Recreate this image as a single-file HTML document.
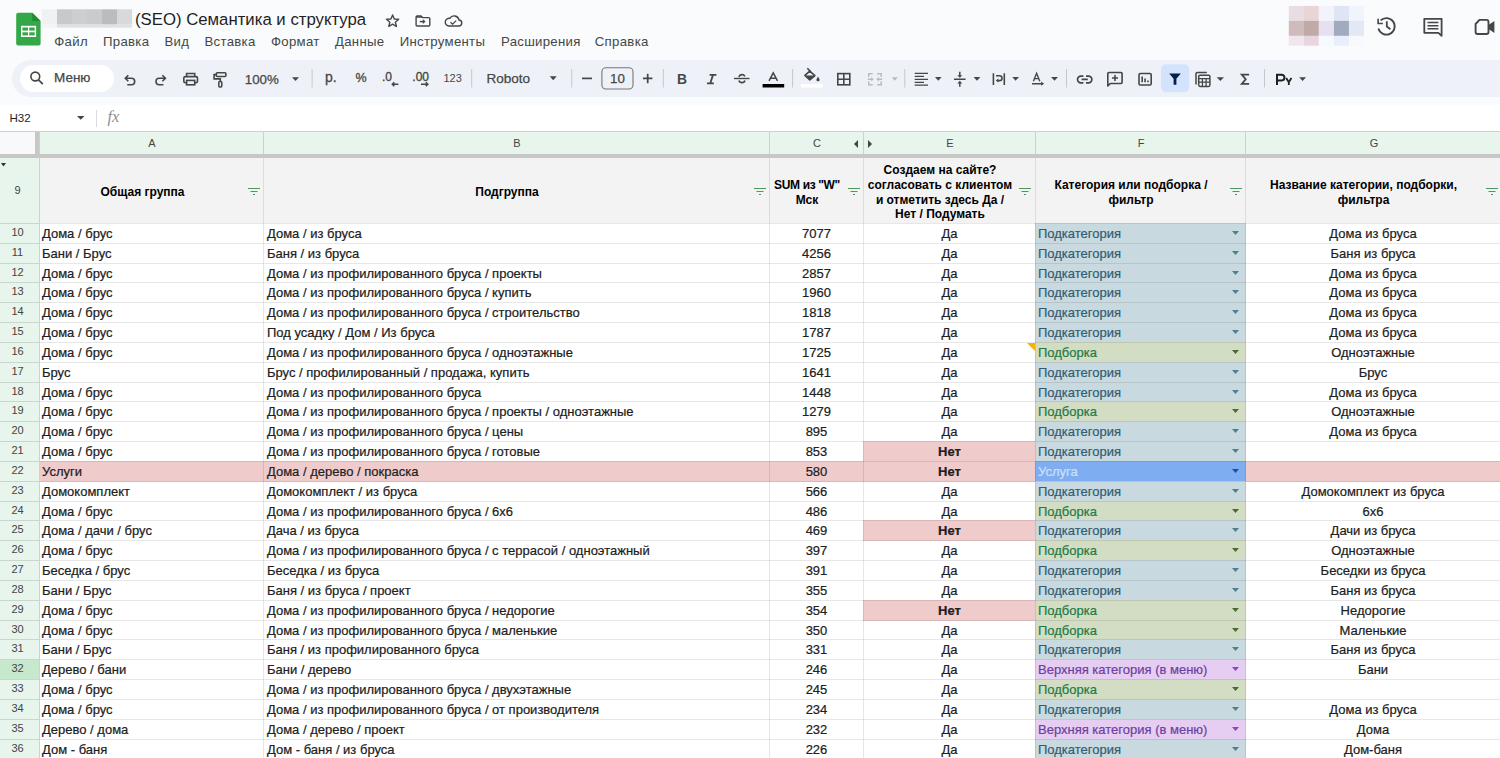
<!DOCTYPE html><html><head><meta charset="utf-8"><style>
*{margin:0;padding:0;box-sizing:border-box}
html,body{width:1500px;height:758px;overflow:hidden;background:#fff;font-family:"Liberation Sans",sans-serif;position:relative}
.a{position:absolute;white-space:nowrap}
.t{font-size:13px;color:#202020;line-height:15px;-webkit-text-stroke:0.2px currentColor}
.rh{font-size:11px;color:#444;line-height:12px;text-align:center;width:35px;left:0}
.hb{font-weight:bold;font-size:12px;color:#000;line-height:14.8px;text-align:center}
.menu{font-size:13.2px;color:#444746;line-height:16px;top:34px;letter-spacing:0.3px}
.ic{position:absolute}
</style></head><body>
<div class="a" style="left:0;top:0;width:1500px;height:105px;background:#f9fbfd"></div>
<div class="a" style="left:12px;top:60px;width:1600px;height:37px;background:#eef2f8;border-radius:18.5px"></div>
<div class="a" style="left:20px;top:65px;width:94px;height:27px;background:#fff;border-radius:14px"></div>
<div class="a" style="left:0;top:131px;width:1500px;height:1px;background:#d0d0d0"></div>
<div class="a" style="left:0;top:132px;width:35px;height:22px;background:#f8f9fa"></div>
<div class="a" style="left:35px;top:132px;width:4px;height:22px;background:#c7c7c7"></div>
<div class="a" style="left:39px;top:132px;width:1461px;height:22px;background:#e7f5ec"></div>
<div class="a" style="left:0;top:154px;width:1500px;height:4px;background:#c7c7c7"></div>
<div class="a" style="left:0;top:158px;width:39px;height:600px;background:#e7f5ec"></div>
<div class="a" style="left:40px;top:158px;width:1460px;height:65px;background:#f3f3f3"></div>
<div class="a" style="left:0;top:660px;width:39px;height:19px;background:#c6e8cd"></div>
<div class="a" style="left:1035px;top:223px;width:211px;height:21px;background:#c8dae0"></div>
<div class="a" style="left:1035px;top:243px;width:211px;height:21px;background:#c8dae0"></div>
<div class="a" style="left:1035px;top:263px;width:211px;height:20px;background:#c8dae0"></div>
<div class="a" style="left:1035px;top:282px;width:211px;height:21px;background:#c8dae0"></div>
<div class="a" style="left:1035px;top:302px;width:211px;height:21px;background:#c8dae0"></div>
<div class="a" style="left:1035px;top:322px;width:211px;height:21px;background:#c8dae0"></div>
<div class="a" style="left:1035px;top:342px;width:211px;height:21px;background:#d2ddc3"></div>
<div class="a" style="left:1035px;top:362px;width:211px;height:21px;background:#c8dae0"></div>
<div class="a" style="left:1035px;top:382px;width:211px;height:20px;background:#c8dae0"></div>
<div class="a" style="left:1035px;top:401px;width:211px;height:21px;background:#d2ddc3"></div>
<div class="a" style="left:1035px;top:421px;width:211px;height:21px;background:#c8dae0"></div>
<div class="a" style="left:863px;top:441px;width:173px;height:21px;background:#f0cbcc"></div>
<div class="a" style="left:1035px;top:441px;width:211px;height:21px;background:#c8dae0"></div>
<div class="a" style="left:39px;top:461px;width:1461px;height:21px;background:#f0cbcc"></div>
<div class="a" style="left:1035px;top:461px;width:211px;height:21px;background:#7eadf2"></div>
<div class="a" style="left:1035px;top:481px;width:211px;height:21px;background:#c8dae0"></div>
<div class="a" style="left:1035px;top:501px;width:211px;height:20px;background:#d2ddc3"></div>
<div class="a" style="left:863px;top:520px;width:173px;height:21px;background:#f0cbcc"></div>
<div class="a" style="left:1035px;top:520px;width:211px;height:21px;background:#c8dae0"></div>
<div class="a" style="left:1035px;top:540px;width:211px;height:21px;background:#d2ddc3"></div>
<div class="a" style="left:1035px;top:560px;width:211px;height:21px;background:#c8dae0"></div>
<div class="a" style="left:1035px;top:580px;width:211px;height:21px;background:#c8dae0"></div>
<div class="a" style="left:863px;top:600px;width:173px;height:21px;background:#f0cbcc"></div>
<div class="a" style="left:1035px;top:600px;width:211px;height:21px;background:#d2ddc3"></div>
<div class="a" style="left:1035px;top:620px;width:211px;height:20px;background:#d2ddc3"></div>
<div class="a" style="left:1035px;top:639px;width:211px;height:21px;background:#c8dae0"></div>
<div class="a" style="left:1035px;top:659px;width:211px;height:21px;background:#e5cef2"></div>
<div class="a" style="left:1035px;top:679px;width:211px;height:21px;background:#d2ddc3"></div>
<div class="a" style="left:1035px;top:699px;width:211px;height:21px;background:#c8dae0"></div>
<div class="a" style="left:1035px;top:719px;width:211px;height:21px;background:#e5cef2"></div>
<div class="a" style="left:1035px;top:739px;width:211px;height:20px;background:#c8dae0"></div>
<div class="a" style="left:40px;top:223px;width:1460px;height:1px;background:rgba(0,0,0,0.095)"></div>
<div class="a" style="left:0;top:223px;width:39px;height:1px;background:#c9d6cd"></div>
<div class="a" style="left:40px;top:243px;width:1460px;height:1px;background:rgba(0,0,0,0.095)"></div>
<div class="a" style="left:0;top:243px;width:39px;height:1px;background:#c9d6cd"></div>
<div class="a" style="left:40px;top:263px;width:1460px;height:1px;background:rgba(0,0,0,0.095)"></div>
<div class="a" style="left:0;top:263px;width:39px;height:1px;background:#c9d6cd"></div>
<div class="a" style="left:40px;top:282px;width:1460px;height:1px;background:rgba(0,0,0,0.095)"></div>
<div class="a" style="left:0;top:282px;width:39px;height:1px;background:#c9d6cd"></div>
<div class="a" style="left:40px;top:302px;width:1460px;height:1px;background:rgba(0,0,0,0.095)"></div>
<div class="a" style="left:0;top:302px;width:39px;height:1px;background:#c9d6cd"></div>
<div class="a" style="left:40px;top:322px;width:1460px;height:1px;background:rgba(0,0,0,0.095)"></div>
<div class="a" style="left:0;top:322px;width:39px;height:1px;background:#c9d6cd"></div>
<div class="a" style="left:40px;top:342px;width:1460px;height:1px;background:rgba(0,0,0,0.095)"></div>
<div class="a" style="left:0;top:342px;width:39px;height:1px;background:#c9d6cd"></div>
<div class="a" style="left:40px;top:362px;width:1460px;height:1px;background:rgba(0,0,0,0.095)"></div>
<div class="a" style="left:0;top:362px;width:39px;height:1px;background:#c9d6cd"></div>
<div class="a" style="left:40px;top:382px;width:1460px;height:1px;background:rgba(0,0,0,0.095)"></div>
<div class="a" style="left:0;top:382px;width:39px;height:1px;background:#c9d6cd"></div>
<div class="a" style="left:40px;top:401px;width:1460px;height:1px;background:rgba(0,0,0,0.095)"></div>
<div class="a" style="left:0;top:401px;width:39px;height:1px;background:#c9d6cd"></div>
<div class="a" style="left:40px;top:421px;width:1460px;height:1px;background:rgba(0,0,0,0.095)"></div>
<div class="a" style="left:0;top:421px;width:39px;height:1px;background:#c9d6cd"></div>
<div class="a" style="left:40px;top:441px;width:1460px;height:1px;background:rgba(0,0,0,0.095)"></div>
<div class="a" style="left:0;top:441px;width:39px;height:1px;background:#c9d6cd"></div>
<div class="a" style="left:40px;top:461px;width:1460px;height:1px;background:rgba(0,0,0,0.095)"></div>
<div class="a" style="left:0;top:461px;width:39px;height:1px;background:#c9d6cd"></div>
<div class="a" style="left:40px;top:481px;width:1460px;height:1px;background:rgba(0,0,0,0.095)"></div>
<div class="a" style="left:0;top:481px;width:39px;height:1px;background:#c9d6cd"></div>
<div class="a" style="left:40px;top:501px;width:1460px;height:1px;background:rgba(0,0,0,0.095)"></div>
<div class="a" style="left:0;top:501px;width:39px;height:1px;background:#c9d6cd"></div>
<div class="a" style="left:40px;top:520px;width:1460px;height:1px;background:rgba(0,0,0,0.095)"></div>
<div class="a" style="left:0;top:520px;width:39px;height:1px;background:#c9d6cd"></div>
<div class="a" style="left:40px;top:540px;width:1460px;height:1px;background:rgba(0,0,0,0.095)"></div>
<div class="a" style="left:0;top:540px;width:39px;height:1px;background:#c9d6cd"></div>
<div class="a" style="left:40px;top:560px;width:1460px;height:1px;background:rgba(0,0,0,0.095)"></div>
<div class="a" style="left:0;top:560px;width:39px;height:1px;background:#c9d6cd"></div>
<div class="a" style="left:40px;top:580px;width:1460px;height:1px;background:rgba(0,0,0,0.095)"></div>
<div class="a" style="left:0;top:580px;width:39px;height:1px;background:#c9d6cd"></div>
<div class="a" style="left:40px;top:600px;width:1460px;height:1px;background:rgba(0,0,0,0.095)"></div>
<div class="a" style="left:0;top:600px;width:39px;height:1px;background:#c9d6cd"></div>
<div class="a" style="left:40px;top:620px;width:1460px;height:1px;background:rgba(0,0,0,0.095)"></div>
<div class="a" style="left:0;top:620px;width:39px;height:1px;background:#c9d6cd"></div>
<div class="a" style="left:40px;top:639px;width:1460px;height:1px;background:rgba(0,0,0,0.095)"></div>
<div class="a" style="left:0;top:639px;width:39px;height:1px;background:#c9d6cd"></div>
<div class="a" style="left:40px;top:659px;width:1460px;height:1px;background:rgba(0,0,0,0.095)"></div>
<div class="a" style="left:0;top:659px;width:39px;height:1px;background:#c9d6cd"></div>
<div class="a" style="left:40px;top:679px;width:1460px;height:1px;background:rgba(0,0,0,0.095)"></div>
<div class="a" style="left:0;top:679px;width:39px;height:1px;background:#c9d6cd"></div>
<div class="a" style="left:40px;top:699px;width:1460px;height:1px;background:rgba(0,0,0,0.095)"></div>
<div class="a" style="left:0;top:699px;width:39px;height:1px;background:#c9d6cd"></div>
<div class="a" style="left:40px;top:719px;width:1460px;height:1px;background:rgba(0,0,0,0.095)"></div>
<div class="a" style="left:0;top:719px;width:39px;height:1px;background:#c9d6cd"></div>
<div class="a" style="left:40px;top:739px;width:1460px;height:1px;background:rgba(0,0,0,0.095)"></div>
<div class="a" style="left:0;top:739px;width:39px;height:1px;background:#c9d6cd"></div>
<div class="a" style="left:40px;top:758px;width:1460px;height:1px;background:rgba(0,0,0,0.095)"></div>
<div class="a" style="left:0;top:758px;width:39px;height:1px;background:#c9d6cd"></div>
<div class="a" style="left:39px;top:132px;width:1px;height:22px;background:#c9d3cc"></div>
<div class="a" style="left:39px;top:158px;width:1px;height:600px;background:rgba(0,0,0,0.095)"></div>
<div class="a" style="left:263px;top:132px;width:1px;height:22px;background:#c9d3cc"></div>
<div class="a" style="left:263px;top:158px;width:1px;height:600px;background:rgba(0,0,0,0.095)"></div>
<div class="a" style="left:769px;top:132px;width:1px;height:22px;background:#c9d3cc"></div>
<div class="a" style="left:769px;top:158px;width:1px;height:600px;background:rgba(0,0,0,0.095)"></div>
<div class="a" style="left:863px;top:132px;width:1px;height:22px;background:#c9d3cc"></div>
<div class="a" style="left:863px;top:158px;width:1px;height:600px;background:rgba(0,0,0,0.095)"></div>
<div class="a" style="left:1035px;top:132px;width:1px;height:22px;background:#c9d3cc"></div>
<div class="a" style="left:1035px;top:158px;width:1px;height:600px;background:rgba(0,0,0,0.095)"></div>
<div class="a" style="left:1245px;top:132px;width:1px;height:22px;background:#c9d3cc"></div>
<div class="a" style="left:1245px;top:158px;width:1px;height:600px;background:rgba(0,0,0,0.095)"></div>
<div class="a" style="left:39px;top:158px;width:1px;height:600px;background:#d0d0d0"></div>
<div class="a" style="left:132px;top:137px;width:40px;text-align:center;font-size:11px;line-height:13px;color:#444">A</div>
<div class="a" style="left:497px;top:137px;width:40px;text-align:center;font-size:11px;line-height:13px;color:#444">B</div>
<div class="a" style="left:797px;top:137px;width:40px;text-align:center;font-size:11px;line-height:13px;color:#444">C</div>
<div class="a" style="left:930px;top:137px;width:40px;text-align:center;font-size:11px;line-height:13px;color:#444">E</div>
<div class="a" style="left:1121px;top:137px;width:40px;text-align:center;font-size:11px;line-height:13px;color:#444">F</div>
<div class="a" style="left:1354px;top:137px;width:40px;text-align:center;font-size:11px;line-height:13px;color:#444">G</div>
<svg class="ic" style="left:853px;top:140px" width="6" height="8"><path d="M5 0 L1 4 L5 8Z" fill="#444"/></svg>
<svg class="ic" style="left:867px;top:140px" width="6" height="8"><path d="M1 0 L5 4 L1 8Z" fill="#444"/></svg>
<div class="a rh" style="top:184px">9</div>
<svg class="ic" style="left:0px;top:163px" width="8" height="5"><path d="M1 0 L6 0 L3.5 3.5Z" fill="#333"/></svg>
<div class="a hb" style="left:41px;top:185.0px;width:203px">Общая группа</div>
<div class="a hb" style="left:264px;top:185.0px;width:486px">Подгруппа</div>
<div class="a hb" style="left:770px;top:178.0px;width:74px"><span style="letter-spacing:-0.35px">SUM из "W"</span></div>
<div class="a hb" style="left:770px;top:192.8px;width:74px">Мск</div>
<div class="a hb" style="left:864px;top:163.0px;width:152px">Создаем на сайте?</div>
<div class="a hb" style="left:864px;top:177.8px;width:152px">согласовать с клиентом</div>
<div class="a hb" style="left:864px;top:192.6px;width:152px">и отметить здесь Да /</div>
<div class="a hb" style="left:864px;top:207.4px;width:152px">Нет / Подумать</div>
<div class="a hb" style="left:1036px;top:178.0px;width:190px">Категория или подборка /</div>
<div class="a hb" style="left:1036px;top:192.8px;width:190px">фильтр</div>
<div class="a hb" style="left:1246px;top:178.0px;width:235px">Название категории, подборки,</div>
<div class="a hb" style="left:1246px;top:192.8px;width:235px">фильтра</div>
<svg class="ic" style="left:248px;top:188px" width="12" height="8"><path d="M0 0.5h12M2.5 3.5h7M5 6.5h2" stroke="#4a9a5c" stroke-width="1.2"/></svg>
<svg class="ic" style="left:754px;top:188px" width="12" height="8"><path d="M0 0.5h12M2.5 3.5h7M5 6.5h2" stroke="#4a9a5c" stroke-width="1.2"/></svg>
<svg class="ic" style="left:848px;top:188px" width="12" height="8"><path d="M0 0.5h12M2.5 3.5h7M5 6.5h2" stroke="#4a9a5c" stroke-width="1.2"/></svg>
<svg class="ic" style="left:1019px;top:188px" width="12" height="8"><path d="M0 0.5h12M2.5 3.5h7M5 6.5h2" stroke="#4a9a5c" stroke-width="1.2"/></svg>
<svg class="ic" style="left:1230px;top:188px" width="12" height="8"><path d="M0 0.5h12M2.5 3.5h7M5 6.5h2" stroke="#4a9a5c" stroke-width="1.2"/></svg>
<svg class="ic" style="left:1486px;top:188px" width="12" height="8"><path d="M0 0.5h12M2.5 3.5h7M5 6.5h2" stroke="#4a9a5c" stroke-width="1.2"/></svg>
<div class="a rh" style="top:226px">10</div>
<div class="a t" style="left:42px;top:226px">Дома / брус</div>
<div class="a t" style="left:267px;top:226px">Дома / из бруса</div>
<div class="a t" style="left:770px;top:226px;width:93px;text-align:center">7077</div>
<div class="a t" style="left:864px;top:226px;width:171px;text-align:center;">Да</div>
<div class="a t" style="left:1038px;top:226px;color:#335c70">Подкатегория</div>
<svg class="ic" style="left:1232px;top:231px" width="8" height="5"><path d="M0 0 L7 0 L3.5 4Z" fill="#4f7f93"/></svg>
<div class="a t" style="left:1246px;top:226px;width:254px;text-align:center">Дома из бруса</div>
<div class="a rh" style="top:246px">11</div>
<div class="a t" style="left:42px;top:246px">Бани / Брус</div>
<div class="a t" style="left:267px;top:246px">Баня / из бруса</div>
<div class="a t" style="left:770px;top:246px;width:93px;text-align:center">4256</div>
<div class="a t" style="left:864px;top:246px;width:171px;text-align:center;">Да</div>
<div class="a t" style="left:1038px;top:246px;color:#335c70">Подкатегория</div>
<svg class="ic" style="left:1232px;top:251px" width="8" height="5"><path d="M0 0 L7 0 L3.5 4Z" fill="#4f7f93"/></svg>
<div class="a t" style="left:1246px;top:246px;width:254px;text-align:center">Баня из бруса</div>
<div class="a rh" style="top:266px">12</div>
<div class="a t" style="left:42px;top:266px">Дома / брус</div>
<div class="a t" style="left:267px;top:266px">Дома / из профилированного бруса / проекты</div>
<div class="a t" style="left:770px;top:266px;width:93px;text-align:center">2857</div>
<div class="a t" style="left:864px;top:266px;width:171px;text-align:center;">Да</div>
<div class="a t" style="left:1038px;top:266px;color:#335c70">Подкатегория</div>
<svg class="ic" style="left:1232px;top:271px" width="8" height="5"><path d="M0 0 L7 0 L3.5 4Z" fill="#4f7f93"/></svg>
<div class="a t" style="left:1246px;top:266px;width:254px;text-align:center">Дома из бруса</div>
<div class="a rh" style="top:285px">13</div>
<div class="a t" style="left:42px;top:285px">Дома / брус</div>
<div class="a t" style="left:267px;top:285px">Дома / из профилированного бруса / купить</div>
<div class="a t" style="left:770px;top:285px;width:93px;text-align:center">1960</div>
<div class="a t" style="left:864px;top:285px;width:171px;text-align:center;">Да</div>
<div class="a t" style="left:1038px;top:285px;color:#335c70">Подкатегория</div>
<svg class="ic" style="left:1232px;top:290px" width="8" height="5"><path d="M0 0 L7 0 L3.5 4Z" fill="#4f7f93"/></svg>
<div class="a t" style="left:1246px;top:285px;width:254px;text-align:center">Дома из бруса</div>
<div class="a rh" style="top:305px">14</div>
<div class="a t" style="left:42px;top:305px">Дома / брус</div>
<div class="a t" style="left:267px;top:305px">Дома / из профилированного бруса / строительство</div>
<div class="a t" style="left:770px;top:305px;width:93px;text-align:center">1818</div>
<div class="a t" style="left:864px;top:305px;width:171px;text-align:center;">Да</div>
<div class="a t" style="left:1038px;top:305px;color:#335c70">Подкатегория</div>
<svg class="ic" style="left:1232px;top:310px" width="8" height="5"><path d="M0 0 L7 0 L3.5 4Z" fill="#4f7f93"/></svg>
<div class="a t" style="left:1246px;top:305px;width:254px;text-align:center">Дома из бруса</div>
<div class="a rh" style="top:325px">15</div>
<div class="a t" style="left:42px;top:325px">Дома / брус</div>
<div class="a t" style="left:267px;top:325px">Под усадку / Дом / Из бруса</div>
<div class="a t" style="left:770px;top:325px;width:93px;text-align:center">1787</div>
<div class="a t" style="left:864px;top:325px;width:171px;text-align:center;">Да</div>
<div class="a t" style="left:1038px;top:325px;color:#335c70">Подкатегория</div>
<svg class="ic" style="left:1232px;top:330px" width="8" height="5"><path d="M0 0 L7 0 L3.5 4Z" fill="#4f7f93"/></svg>
<div class="a t" style="left:1246px;top:325px;width:254px;text-align:center">Дома из бруса</div>
<div class="a rh" style="top:345px">16</div>
<div class="a t" style="left:42px;top:345px">Дома / брус</div>
<div class="a t" style="left:267px;top:345px">Дома / из профилированного бруса / одноэтажные</div>
<div class="a t" style="left:770px;top:345px;width:93px;text-align:center">1725</div>
<div class="a t" style="left:864px;top:345px;width:171px;text-align:center;">Да</div>
<div class="a t" style="left:1038px;top:345px;color:#237a47">Подборка</div>
<svg class="ic" style="left:1232px;top:350px" width="8" height="5"><path d="M0 0 L7 0 L3.5 4Z" fill="#4a6b2f"/></svg>
<div class="a t" style="left:1246px;top:345px;width:254px;text-align:center">Одноэтажные</div>
<div class="a rh" style="top:365px">17</div>
<div class="a t" style="left:42px;top:365px">Брус</div>
<div class="a t" style="left:267px;top:365px">Брус / профилированный / продажа, купить</div>
<div class="a t" style="left:770px;top:365px;width:93px;text-align:center">1641</div>
<div class="a t" style="left:864px;top:365px;width:171px;text-align:center;">Да</div>
<div class="a t" style="left:1038px;top:365px;color:#335c70">Подкатегория</div>
<svg class="ic" style="left:1232px;top:370px" width="8" height="5"><path d="M0 0 L7 0 L3.5 4Z" fill="#4f7f93"/></svg>
<div class="a t" style="left:1246px;top:365px;width:254px;text-align:center">Брус</div>
<div class="a rh" style="top:385px">18</div>
<div class="a t" style="left:42px;top:385px">Дома / брус</div>
<div class="a t" style="left:267px;top:385px">Дома / из профилированного бруса</div>
<div class="a t" style="left:770px;top:385px;width:93px;text-align:center">1448</div>
<div class="a t" style="left:864px;top:385px;width:171px;text-align:center;">Да</div>
<div class="a t" style="left:1038px;top:385px;color:#335c70">Подкатегория</div>
<svg class="ic" style="left:1232px;top:390px" width="8" height="5"><path d="M0 0 L7 0 L3.5 4Z" fill="#4f7f93"/></svg>
<div class="a t" style="left:1246px;top:385px;width:254px;text-align:center">Дома из бруса</div>
<div class="a rh" style="top:404px">19</div>
<div class="a t" style="left:42px;top:404px">Дома / брус</div>
<div class="a t" style="left:267px;top:404px">Дома / из профилированного бруса / проекты / одноэтажные</div>
<div class="a t" style="left:770px;top:404px;width:93px;text-align:center">1279</div>
<div class="a t" style="left:864px;top:404px;width:171px;text-align:center;">Да</div>
<div class="a t" style="left:1038px;top:404px;color:#237a47">Подборка</div>
<svg class="ic" style="left:1232px;top:409px" width="8" height="5"><path d="M0 0 L7 0 L3.5 4Z" fill="#4a6b2f"/></svg>
<div class="a t" style="left:1246px;top:404px;width:254px;text-align:center">Одноэтажные</div>
<div class="a rh" style="top:424px">20</div>
<div class="a t" style="left:42px;top:424px">Дома / брус</div>
<div class="a t" style="left:267px;top:424px">Дома / из профилированного бруса / цены</div>
<div class="a t" style="left:770px;top:424px;width:93px;text-align:center">895</div>
<div class="a t" style="left:864px;top:424px;width:171px;text-align:center;">Да</div>
<div class="a t" style="left:1038px;top:424px;color:#335c70">Подкатегория</div>
<svg class="ic" style="left:1232px;top:429px" width="8" height="5"><path d="M0 0 L7 0 L3.5 4Z" fill="#4f7f93"/></svg>
<div class="a t" style="left:1246px;top:424px;width:254px;text-align:center">Дома из бруса</div>
<div class="a rh" style="top:444px">21</div>
<div class="a t" style="left:42px;top:444px">Дома / брус</div>
<div class="a t" style="left:267px;top:444px">Дома / из профилированного бруса / готовые</div>
<div class="a t" style="left:770px;top:444px;width:93px;text-align:center">853</div>
<div class="a t" style="left:864px;top:444px;width:171px;text-align:center; font-weight:bold;">Нет</div>
<div class="a t" style="left:1038px;top:444px;color:#335c70">Подкатегория</div>
<svg class="ic" style="left:1232px;top:449px" width="8" height="5"><path d="M0 0 L7 0 L3.5 4Z" fill="#4f7f93"/></svg>
<div class="a rh" style="top:464px">22</div>
<div class="a t" style="left:42px;top:464px">Услуги</div>
<div class="a t" style="left:267px;top:464px">Дома / дерево / покраска</div>
<div class="a t" style="left:770px;top:464px;width:93px;text-align:center">580</div>
<div class="a t" style="left:864px;top:464px;width:171px;text-align:center; font-weight:bold;">Нет</div>
<div class="a t" style="left:1038px;top:464px;color:#cde1fb">Услуга</div>
<svg class="ic" style="left:1232px;top:469px" width="8" height="5"><path d="M0 0 L7 0 L3.5 4Z" fill="#1d4fa8"/></svg>
<div class="a rh" style="top:484px">23</div>
<div class="a t" style="left:42px;top:484px">Домокомплект</div>
<div class="a t" style="left:267px;top:484px">Домокомплект / из бруса</div>
<div class="a t" style="left:770px;top:484px;width:93px;text-align:center">566</div>
<div class="a t" style="left:864px;top:484px;width:171px;text-align:center;">Да</div>
<div class="a t" style="left:1038px;top:484px;color:#335c70">Подкатегория</div>
<svg class="ic" style="left:1232px;top:489px" width="8" height="5"><path d="M0 0 L7 0 L3.5 4Z" fill="#4f7f93"/></svg>
<div class="a t" style="left:1246px;top:484px;width:254px;text-align:center">Домокомплект из бруса</div>
<div class="a rh" style="top:504px">24</div>
<div class="a t" style="left:42px;top:504px">Дома / брус</div>
<div class="a t" style="left:267px;top:504px">Дома / из профилированного бруса / 6х6</div>
<div class="a t" style="left:770px;top:504px;width:93px;text-align:center">486</div>
<div class="a t" style="left:864px;top:504px;width:171px;text-align:center;">Да</div>
<div class="a t" style="left:1038px;top:504px;color:#237a47">Подборка</div>
<svg class="ic" style="left:1232px;top:509px" width="8" height="5"><path d="M0 0 L7 0 L3.5 4Z" fill="#4a6b2f"/></svg>
<div class="a t" style="left:1246px;top:504px;width:254px;text-align:center">6х6</div>
<div class="a rh" style="top:523px">25</div>
<div class="a t" style="left:42px;top:523px">Дома / дачи / брус</div>
<div class="a t" style="left:267px;top:523px">Дача / из бруса</div>
<div class="a t" style="left:770px;top:523px;width:93px;text-align:center">469</div>
<div class="a t" style="left:864px;top:523px;width:171px;text-align:center; font-weight:bold;">Нет</div>
<div class="a t" style="left:1038px;top:523px;color:#335c70">Подкатегория</div>
<svg class="ic" style="left:1232px;top:528px" width="8" height="5"><path d="M0 0 L7 0 L3.5 4Z" fill="#4f7f93"/></svg>
<div class="a t" style="left:1246px;top:523px;width:254px;text-align:center">Дачи из бруса</div>
<div class="a rh" style="top:543px">26</div>
<div class="a t" style="left:42px;top:543px">Дома / брус</div>
<div class="a t" style="left:267px;top:543px">Дома / из профилированного бруса / с террасой / одноэтажный</div>
<div class="a t" style="left:770px;top:543px;width:93px;text-align:center">397</div>
<div class="a t" style="left:864px;top:543px;width:171px;text-align:center;">Да</div>
<div class="a t" style="left:1038px;top:543px;color:#237a47">Подборка</div>
<svg class="ic" style="left:1232px;top:548px" width="8" height="5"><path d="M0 0 L7 0 L3.5 4Z" fill="#4a6b2f"/></svg>
<div class="a t" style="left:1246px;top:543px;width:254px;text-align:center">Одноэтажные</div>
<div class="a rh" style="top:563px">27</div>
<div class="a t" style="left:42px;top:563px">Беседка / брус</div>
<div class="a t" style="left:267px;top:563px">Беседка / из бруса</div>
<div class="a t" style="left:770px;top:563px;width:93px;text-align:center">391</div>
<div class="a t" style="left:864px;top:563px;width:171px;text-align:center;">Да</div>
<div class="a t" style="left:1038px;top:563px;color:#335c70">Подкатегория</div>
<svg class="ic" style="left:1232px;top:568px" width="8" height="5"><path d="M0 0 L7 0 L3.5 4Z" fill="#4f7f93"/></svg>
<div class="a t" style="left:1246px;top:563px;width:254px;text-align:center">Беседки из бруса</div>
<div class="a rh" style="top:583px">28</div>
<div class="a t" style="left:42px;top:583px">Бани / Брус</div>
<div class="a t" style="left:267px;top:583px">Баня / из бруса / проект</div>
<div class="a t" style="left:770px;top:583px;width:93px;text-align:center">355</div>
<div class="a t" style="left:864px;top:583px;width:171px;text-align:center;">Да</div>
<div class="a t" style="left:1038px;top:583px;color:#335c70">Подкатегория</div>
<svg class="ic" style="left:1232px;top:588px" width="8" height="5"><path d="M0 0 L7 0 L3.5 4Z" fill="#4f7f93"/></svg>
<div class="a t" style="left:1246px;top:583px;width:254px;text-align:center">Баня из бруса</div>
<div class="a rh" style="top:603px">29</div>
<div class="a t" style="left:42px;top:603px">Дома / брус</div>
<div class="a t" style="left:267px;top:603px">Дома / из профилированного бруса / недорогие</div>
<div class="a t" style="left:770px;top:603px;width:93px;text-align:center">354</div>
<div class="a t" style="left:864px;top:603px;width:171px;text-align:center; font-weight:bold;">Нет</div>
<div class="a t" style="left:1038px;top:603px;color:#237a47">Подборка</div>
<svg class="ic" style="left:1232px;top:608px" width="8" height="5"><path d="M0 0 L7 0 L3.5 4Z" fill="#4a6b2f"/></svg>
<div class="a t" style="left:1246px;top:603px;width:254px;text-align:center">Недорогие</div>
<div class="a rh" style="top:623px">30</div>
<div class="a t" style="left:42px;top:623px">Дома / брус</div>
<div class="a t" style="left:267px;top:623px">Дома / из профилированного бруса / маленькие</div>
<div class="a t" style="left:770px;top:623px;width:93px;text-align:center">350</div>
<div class="a t" style="left:864px;top:623px;width:171px;text-align:center;">Да</div>
<div class="a t" style="left:1038px;top:623px;color:#237a47">Подборка</div>
<svg class="ic" style="left:1232px;top:628px" width="8" height="5"><path d="M0 0 L7 0 L3.5 4Z" fill="#4a6b2f"/></svg>
<div class="a t" style="left:1246px;top:623px;width:254px;text-align:center">Маленькие</div>
<div class="a rh" style="top:642px">31</div>
<div class="a t" style="left:42px;top:642px">Бани / Брус</div>
<div class="a t" style="left:267px;top:642px">Баня / из профилированного бруса</div>
<div class="a t" style="left:770px;top:642px;width:93px;text-align:center">331</div>
<div class="a t" style="left:864px;top:642px;width:171px;text-align:center;">Да</div>
<div class="a t" style="left:1038px;top:642px;color:#335c70">Подкатегория</div>
<svg class="ic" style="left:1232px;top:647px" width="8" height="5"><path d="M0 0 L7 0 L3.5 4Z" fill="#4f7f93"/></svg>
<div class="a t" style="left:1246px;top:642px;width:254px;text-align:center">Баня из бруса</div>
<div class="a rh" style="top:662px">32</div>
<div class="a t" style="left:42px;top:662px">Дерево / бани</div>
<div class="a t" style="left:267px;top:662px">Бани / дерево</div>
<div class="a t" style="left:770px;top:662px;width:93px;text-align:center">246</div>
<div class="a t" style="left:864px;top:662px;width:171px;text-align:center;">Да</div>
<div class="a t" style="left:1038px;top:662px;color:#6e3ea0">Верхняя категория (в меню)</div>
<svg class="ic" style="left:1232px;top:667px" width="8" height="5"><path d="M0 0 L7 0 L3.5 4Z" fill="#9c3ad6"/></svg>
<div class="a t" style="left:1246px;top:662px;width:254px;text-align:center">Бани</div>
<div class="a rh" style="top:682px">33</div>
<div class="a t" style="left:42px;top:682px">Дома / брус</div>
<div class="a t" style="left:267px;top:682px">Дома / из профилированного бруса / двухэтажные</div>
<div class="a t" style="left:770px;top:682px;width:93px;text-align:center">245</div>
<div class="a t" style="left:864px;top:682px;width:171px;text-align:center;">Да</div>
<div class="a t" style="left:1038px;top:682px;color:#237a47">Подборка</div>
<svg class="ic" style="left:1232px;top:687px" width="8" height="5"><path d="M0 0 L7 0 L3.5 4Z" fill="#4a6b2f"/></svg>
<div class="a rh" style="top:702px">34</div>
<div class="a t" style="left:42px;top:702px">Дома / брус</div>
<div class="a t" style="left:267px;top:702px">Дома / из профилированного бруса / от производителя</div>
<div class="a t" style="left:770px;top:702px;width:93px;text-align:center">234</div>
<div class="a t" style="left:864px;top:702px;width:171px;text-align:center;">Да</div>
<div class="a t" style="left:1038px;top:702px;color:#335c70">Подкатегория</div>
<svg class="ic" style="left:1232px;top:707px" width="8" height="5"><path d="M0 0 L7 0 L3.5 4Z" fill="#4f7f93"/></svg>
<div class="a t" style="left:1246px;top:702px;width:254px;text-align:center">Дома из бруса</div>
<div class="a rh" style="top:722px">35</div>
<div class="a t" style="left:42px;top:722px">Дерево / дома</div>
<div class="a t" style="left:267px;top:722px">Дома / дерево / проект</div>
<div class="a t" style="left:770px;top:722px;width:93px;text-align:center">232</div>
<div class="a t" style="left:864px;top:722px;width:171px;text-align:center;">Да</div>
<div class="a t" style="left:1038px;top:722px;color:#6e3ea0">Верхняя категория (в меню)</div>
<svg class="ic" style="left:1232px;top:727px" width="8" height="5"><path d="M0 0 L7 0 L3.5 4Z" fill="#9c3ad6"/></svg>
<div class="a t" style="left:1246px;top:722px;width:254px;text-align:center">Дома</div>
<div class="a rh" style="top:742px">36</div>
<div class="a t" style="left:42px;top:742px">Дом - баня</div>
<div class="a t" style="left:267px;top:742px">Дом - баня / из бруса</div>
<div class="a t" style="left:770px;top:742px;width:93px;text-align:center">226</div>
<div class="a t" style="left:864px;top:742px;width:171px;text-align:center;">Да</div>
<div class="a t" style="left:1038px;top:742px;color:#335c70">Подкатегория</div>
<svg class="ic" style="left:1232px;top:747px" width="8" height="5"><path d="M0 0 L7 0 L3.5 4Z" fill="#4f7f93"/></svg>
<div class="a t" style="left:1246px;top:742px;width:254px;text-align:center">Дом-баня</div>
<svg class="ic" style="left:1027px;top:343px" width="8" height="8"><path d="M0 0 L8 0 L8 8Z" fill="#f4b400"/></svg>
<div class="a" style="left:9.5px;top:111px;font-size:11.6px;line-height:14px;color:#1f1f1f">H32</div>
<svg class="ic" style="left:77px;top:116px" width="8" height="5"><path d="M0 0 L7.5 0 L3.75 3.8Z" fill="#444"/></svg>
<div class="a" style="left:96px;top:110px;width:1px;height:16.5px;background:#dadce0"></div>
<div class="a" style="left:107.5px;top:108px;font-family:Liberation Serif;font-style:italic;font-size:16.5px;color:#8a8f94;line-height:18px">fx</div>
<div class="a" style="left:135px;top:10px;font-size:16.75px;line-height:20px;color:#1f1f1f">(SEO) Семантика и структура</div>
<div class="a menu" style="left:54.3px">Файл</div>
<div class="a menu" style="left:103.0px">Правка</div>
<div class="a menu" style="left:164.5px">Вид</div>
<div class="a menu" style="left:204.5px">Вставка</div>
<div class="a menu" style="left:271.0px">Формат</div>
<div class="a menu" style="left:335.0px">Данные</div>
<div class="a menu" style="left:399.7px">Инструменты</div>
<div class="a menu" style="left:501.0px">Расширения</div>
<div class="a menu" style="left:594.8px">Справка</div>
<svg class="ic" style="left:0;top:0" width="1500" height="105" viewBox="0 0 1500 105"><path d="M18.2 12.7 H32.3 L40.6 21 V43.4 A2 2 0 0 1 38.6 45.4 H18.2 A2 2 0 0 1 16.2 43.4 V14.7 A2 2 0 0 1 18.2 12.7Z" fill="#34a846"/><path d="M32.3 12.7 L40.6 21 H32.3Z" fill="#218a33"/><rect x="21" y="25.8" width="15.1" height="11.2" fill="#fff"/><rect x="22.4" y="27.5" width="5.6" height="3.1" fill="#34a846"/><rect x="29.2" y="27.5" width="5.5" height="3.1" fill="#34a846"/><rect x="22.4" y="32.3" width="5.6" height="3.1" fill="#34a846"/><rect x="29.2" y="32.3" width="5.5" height="3.1" fill="#34a846"/><rect x="41.7" y="9.3" width="15.3" height="15.3" fill="#f0f1f3"/><rect x="41.7" y="24.6" width="15.3" height="3.1" fill="#f3f4f6"/><rect x="57.0" y="9.3" width="15.1" height="15.3" fill="#c8c9cb"/><rect x="72.0" y="9.3" width="15.1" height="15.3" fill="#cdcecf"/><rect x="87.0" y="9.3" width="15.1" height="15.3" fill="#cacbcc"/><rect x="102.0" y="9.3" width="15.1" height="15.3" fill="#bbbcbe"/><rect x="117.0" y="9.3" width="15.1" height="15.3" fill="#d8d9da"/><rect x="57" y="24.6" width="75" height="3.1" fill="#e0e1e2"/><polygon points="392.60,14.90 394.30,18.95 398.69,19.32 395.36,22.20 396.36,26.48 392.60,24.20 388.84,26.48 389.84,22.20 386.51,19.32 390.90,18.95" fill="none" stroke="#444746" stroke-width="1.4" stroke-linejoin="round"/><path d="M416.1 17 A1 1 0 0 1 417.1 16 H421 L422.6 17.6 H428.8 A1 1 0 0 1 429.8 18.6 V25 A1 1 0 0 1 428.8 26 H417.1 A1 1 0 0 1 416.1 25Z" fill="none" stroke="#444746" stroke-width="1.4" stroke-linejoin="round"/><path d="M416.1 16.2 H421 L422.6 17.8 H416.1Z" fill="#444746"/><path d="M419.8 21.6 H423.2" stroke="#444746" stroke-width="1.5"/><path d="M422.8 19.3 L425.6 21.6 L422.8 23.9Z" fill="#444746"/><path d="M448.5 26 H458.5 A3 3 0 0 0 459 20 A5 5 0 0 0 449.8 18.3 A3.9 3.9 0 0 0 448.5 26Z" fill="none" stroke="#444746" stroke-width="1.4"/><path d="M450.5 22.2 L452.6 24.2 L456.2 20.6" fill="none" stroke="#444746" stroke-width="1.3"/><rect x="1288.8" y="5.9" width="15.1" height="14.9" fill="#e8dde2"/><rect x="1303.8" y="5.9" width="15.1" height="14.9" fill="#e9d5d6"/><rect x="1318.8" y="5.9" width="15.1" height="14.9" fill="#f3f4fb"/><rect x="1333.9" y="5.9" width="15.1" height="14.9" fill="#dfe5f5"/><rect x="1348.9" y="5.9" width="15.1" height="14.9" fill="#f1f4fd"/><rect x="1288.8" y="20.8" width="15.1" height="15.1" fill="#cfbbbc"/><rect x="1303.8" y="20.8" width="15.1" height="15.1" fill="#bfaaa6"/><rect x="1318.8" y="20.8" width="15.1" height="15.1" fill="#e6e0f0"/><rect x="1333.9" y="20.8" width="15.1" height="15.1" fill="#a2abbd"/><rect x="1348.9" y="20.8" width="15.1" height="15.1" fill="#e2e8f5"/><rect x="1288.8" y="35.9" width="15.1" height="9.8" fill="#f2e6ee"/><rect x="1303.8" y="35.9" width="15.1" height="9.8" fill="#e9d5e0"/><rect x="1318.8" y="35.9" width="15.1" height="9.8" fill="#f6f9fd"/><rect x="1333.9" y="35.9" width="15.1" height="9.8" fill="#e8eefb"/><rect x="1348.9" y="35.9" width="15.1" height="9.8" fill="#f7f9fd"/><path d="M1378.4 28.6 A8.3 8.3 0 1 0 1380.6 20.4" fill="none" stroke="#444746" stroke-width="1.8"/><path d="M1378.1 18.8 V23.5 H1382.9" fill="none" stroke="#444746" stroke-width="1.6"/><path d="M1386.8 21.3 V26.6 L1390.4 29.2" fill="none" stroke="#444746" stroke-width="1.8"/><path d="M1424.3 18.8 H1441.6 V35.8 L1438.4 32.8 H1424.3Z" fill="none" stroke="#444746" stroke-width="1.8" stroke-linejoin="round"/><path d="M1427.5 22.6 H1438.4 M1427.5 25.7 H1438.4 M1427.5 28.8 H1438.4" stroke="#444746" stroke-width="1.5"/><path d="M1479.5 19.9 H1486.5 A2 2 0 0 1 1488.5 21.9 V32 A2 2 0 0 1 1486.5 34 H1477.6 A2 2 0 0 1 1475.6 32 V24Z" fill="none" stroke="#444746" stroke-width="1.9" stroke-linejoin="round"/><path d="M1488.5 25 L1494.4 21 V33 L1488.5 29Z" fill="#444746"/><circle cx="35.3" cy="76.5" r="4.4" fill="none" stroke="#444746" stroke-width="1.6"/><path d="M38.5 79.8 L42.8 84.2" stroke="#444746" stroke-width="1.7"/><text x="54.0" y="82.1" font-family="Liberation Sans" font-size="13.5" font-weight="normal" fill="#444746" stroke="#444746" stroke-width="0.25">Меню</text><path d="M128.3 75.2 L125.3 78.2 L128.3 81.2 M125.6 78.2 H131.4 A3.3 3.3 0 0 1 131.4 84.8 H127.3" fill="none" stroke="#444746" stroke-width="1.6"/><path d="M162.4 75.2 L165.4 78.2 L162.4 81.2 M165.1 78.2 H159.3 A3.3 3.3 0 0 0 159.3 84.8 H163.4" fill="none" stroke="#444746" stroke-width="1.6"/><path d="M186.6 76.3 V73.5 H194.7 V76.3" fill="none" stroke="#444746" stroke-width="1.6"/><rect x="183.8" y="76.6" width="13.7" height="6.2" rx="1.6" fill="none" stroke="#444746" stroke-width="1.6"/><rect x="186.6" y="80.4" width="8.1" height="4.4" fill="#eef2f8" stroke="#444746" stroke-width="1.6"/><rect x="216.3" y="72.8" width="9.6" height="3.7" rx="1" fill="none" stroke="#444746" stroke-width="1.6"/><path d="M216.3 74.6 H214.1 V78.9 H220.3 V81.3" fill="none" stroke="#444746" stroke-width="1.6"/><rect x="218.8" y="81.5" width="3" height="5.4" rx="0.9" fill="none" stroke="#444746" stroke-width="1.5"/><text x="244.8" y="84.2" font-family="Liberation Sans" font-size="13.3" font-weight="normal" fill="#444746" stroke="#444746" stroke-width="0.25">100%</text><path d="M292.0 77.3 H299.0 L295.5 81.0 Z" fill="#444746"/><rect x="311.6" y="69" width="1" height="18.5" fill="#c7c7c7"/><text x="325.0" y="81.7" font-family="Liberation Sans" font-size="14" font-weight="normal" fill="#444746" stroke="#444746" stroke-width="0.3">р.</text><text x="355.6" y="81.8" font-family="Liberation Sans" font-size="12.5" font-weight="normal" fill="#444746" stroke="#444746" stroke-width="0.3">%</text><text x="381.9" y="81.2" font-family="Liberation Sans" font-size="12" font-weight="normal" fill="#444746" stroke="#444746" stroke-width="0.35">.0</text><path d="M392.3 84.2 H398.4 M394.3 82.2 L392.3 84.2 L394.3 86.2" fill="none" stroke="#444746" stroke-width="1.5"/><text x="412.3" y="81.2" font-family="Liberation Sans" font-size="12" font-weight="normal" fill="#444746" stroke="#444746" stroke-width="0.35">.00</text><path d="M421 84.2 H427.8 M425.8 82.2 L427.8 84.2 L425.8 86.2" fill="none" stroke="#444746" stroke-width="1.5"/><text x="443.5" y="81.8" font-family="Liberation Sans" font-size="11" font-weight="normal" fill="#444746" >123</text><rect x="471.2" y="69" width="1" height="18.5" fill="#c7c7c7"/><text x="486.5" y="83.3" font-family="Liberation Sans" font-size="13.5" font-weight="normal" fill="#444746" stroke="#444746" stroke-width="0.25">Roboto</text><path d="M549.8 76.2 H556.7 L553.2 80.3 Z" fill="#444746"/><rect x="571.2" y="69" width="1" height="18.5" fill="#c7c7c7"/><path d="M582 78.4 H592" stroke="#444746" stroke-width="1.7"/><rect x="601.9" y="67.8" width="31.1" height="21.2" rx="4" fill="none" stroke="#747775" stroke-width="1.1"/><text x="610.0" y="83.3" font-family="Liberation Sans" font-size="13.3" font-weight="normal" fill="#444746" stroke="#444746" stroke-width="0.25">10</text><path d="M643 78.4 H652.4 M647.7 73.7 V83.2" stroke="#444746" stroke-width="1.7"/><rect x="662.8" y="69" width="1" height="18.5" fill="#c7c7c7"/><text x="677.0" y="84.0" font-family="Liberation Sans" font-size="13.8" font-weight="bold" fill="#444746" >B</text><path d="M709.6 74.9 H716.4 M707 83.3 H713.8 M713 74.9 L710.3 83.3" fill="none" stroke="#444746" stroke-width="1.8"/><path d="M734 78.5 H749.5" stroke="#444746" stroke-width="1.4"/><path d="M738.9 76.9 A3.3 3.3 0 0 1 744.9 76.3 M738.9 80.4 A3.2 3.2 0 0 0 745 80.4" fill="none" stroke="#444746" stroke-width="1.6"/><path d="M769 80.9 L773.25 72.9 L777.5 80.9 M770.4 78.2 H776.1" fill="none" stroke="#444746" stroke-width="1.5"/><rect x="762.6" y="84" width="21.6" height="3.5" fill="#000"/><rect x="792.1" y="69" width="1" height="18.5" fill="#c7c7c7"/><path d="M807.3 68.3 L810.4 71.4" stroke="#444746" stroke-width="1.6"/><path d="M809.8 71.2 L814.9 75.6 L809.8 80 L804.9 75.4Z" fill="none" stroke="#444746" stroke-width="1.6" stroke-linejoin="round"/><path d="M805 75.4 H814.8 L809.8 80Z" fill="#444746"/><path d="M818 76.4 L819.5 79.2 A1.6 1.6 0 1 1 816.5 79.2Z" fill="#444746"/><rect x="801" y="84" width="22" height="3.5" fill="#fff"/><rect x="837.8" y="73.6" width="12" height="11.2" fill="none" stroke="#444746" stroke-width="1.6"/><path d="M843.8 73.6 V84.8 M837.8 79.2 H849.8" stroke="#444746" stroke-width="1.6"/><path d="M872.7 73.7 H868.7 V77 M868.7 81.4 V84.7 H872.7 M877.1 73.7 H881.2 V77 M881.2 81.4 V84.7 H877.1 M867.8 79.2 H872 M882.2 79.2 H878" fill="none" stroke="#b9bcbb" stroke-width="1.5"/><path d="M871.2 77 L873.8 79.2 L871.2 81.4Z M878.8 77 L876.2 79.2 L878.8 81.4Z" fill="#b9bcbb"/><path d="M891.9 77.3 H897.8 L894.8 80.8 Z" fill="#b9bcbb"/><rect x="904.3" y="69" width="1" height="18.5" fill="#c7c7c7"/><path d="M914.7 73.4 H928 M914.7 76.4 H924 M914.7 79.3 H928 M914.7 82.3 H924 M914.7 85.2 H928" stroke="#444746" stroke-width="1.3"/><path d="M935.0 77.0 H941.6 L938.3 80.7 Z" fill="#444746"/><path d="M954 79.3 H965.6 M959.8 71.7 V76.5 M959.8 82.1 V86.8" stroke="#444746" stroke-width="1.5"/><path d="M957.3 75.2 H962.3 L959.8 77.8Z M957.3 83.4 H962.3 L959.8 80.8Z" fill="#444746"/><path d="M973.6 77.0 H980.3 L977.0 80.7 Z" fill="#444746"/><path d="M993.4 73.3 V85 M1004.3 73.3 V85 M996 75.8 H999.6 A2.4 2.4 0 0 1 999.6 80.6 H997.3" fill="none" stroke="#444746" stroke-width="1.6"/><path d="M998.4 78.6 L995.8 80.6 L998.4 82.6Z" fill="#444746"/><path d="M1012.3 77.0 H1019.0 L1015.6 80.7 Z" fill="#444746"/><path d="M1033.4 81.2 L1036.6 73.3 L1039.8 81.2 M1034.4 78.6 H1038.8 M1032 83.7 H1042.6" fill="none" stroke="#444746" stroke-width="1.4"/><path d="M1041.2 81.6 L1044.1 83.7 L1041.2 85.8Z" fill="#444746"/><path d="M1051.0 77.0 H1058.0 L1054.5 80.7 Z" fill="#444746"/><rect x="1066.0" y="69" width="1" height="18.5" fill="#c7c7c7"/><path d="M1083.4 76.1 H1080.9 A3.35 3.35 0 0 0 1080.9 82.8 H1083.4 M1086 76.1 H1088.5 A3.35 3.35 0 0 1 1088.5 82.8 H1086 M1081.6 79.45 H1087.8" fill="none" stroke="#444746" stroke-width="1.7"/><path d="M1107.8 86 V73.8 A1.2 1.2 0 0 1 1109 72.5 H1120.9 A1.2 1.2 0 0 1 1122.1 73.8 V82.3 A1.2 1.2 0 0 1 1120.9 83.5 H1110.3Z" fill="none" stroke="#444746" stroke-width="1.6" stroke-linejoin="round"/><path d="M1115 75 V81 M1112 78 H1118" stroke="#444746" stroke-width="1.6"/><rect x="1139" y="73.5" width="12.2" height="11.5" rx="1.3" fill="none" stroke="#444746" stroke-width="1.6"/><path d="M1142.2 76.5 V82.2 M1145.1 78.6 V82.2 M1148 80.6 V82.2" stroke="#444746" stroke-width="1.6"/><rect x="1161" y="64.2" width="28.2" height="28" rx="5" fill="#d3e3fd"/><path d="M1169.2 73.5 H1180.8 L1176.4 78.8 V84.7 H1173.6 V78.8Z" fill="#041e49"/><path d="M1196 84.5 V73.8 A1.3 1.3 0 0 1 1197.3 72.5 H1206.8" fill="none" stroke="#444746" stroke-width="1.5"/><rect x="1198.7" y="75.2" width="11.2" height="11.2" rx="1.3" fill="none" stroke="#444746" stroke-width="1.5"/><path d="M1198.7 78.6 H1209.9 M1198.7 82.2 H1209.9 M1202.4 78.6 V86.4 M1206.1 78.6 V86.4" stroke="#444746" stroke-width="1.3"/><path d="M1216.7 77.2 H1224.0 L1220.3 81.0 Z" fill="#444746"/><path d="M1249.1 74.7 H1241.8 L1245.7 79.25 L1241.8 83.8 H1249.1" fill="none" stroke="#444746" stroke-width="1.8"/><rect x="1264.0" y="69" width="1" height="18.5" fill="#c7c7c7"/><path d="M1277 85 V74.7 H1281.6 A2.85 2.85 0 0 1 1281.6 80.4 H1277" fill="none" stroke="#1f1f1f" stroke-width="2"/><path d="M1286.2 78 L1288.8 82.3 L1291.4 78 M1288.8 82.3 V85" fill="none" stroke="#1f1f1f" stroke-width="1.8"/><path d="M1299.2 77.2 H1306.0 L1302.6 81.0 Z" fill="#444746"/></svg>
</body></html>
